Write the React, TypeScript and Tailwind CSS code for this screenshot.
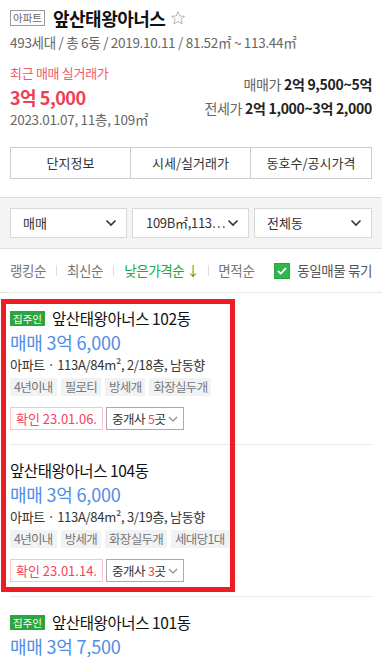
import React from "react";

const F = { fontFamily: '"Noto Sans CJK KR", "Noto Sans", sans-serif' };

function Chevron() {
  return (
    <svg width="12" height="8" viewBox="0 0 12 8">
      <path d="M1.5 1.5 L6 6 L10.5 1.5" fill="none" stroke="#333" strokeWidth="1.6" />
    </svg>
  );
}

function SmallChevron() {
  return (
    <svg width="10" height="6" viewBox="0 0 10 6" className="ml-[3px]">
      <path d="M1 1 L5 5 L9 1" fill="none" stroke="#888" strokeWidth="1.1" />
    </svg>
  );
}

type Item = {
  owner: boolean;
  title: string;
  price: string;
  detail: string;
  tags: string[];
  date: string;
  count: string;
};

const items: Item[] = [
  {
    owner: true,
    title: "앞산태왕아너스 102동",
    price: "매매 3억 6,000",
    detail: "113A/84m², 2/18층, 남동향",
    tags: ["4년이내", "필로티", "방세개", "화장실두개"],
    date: "23.01.06.",
    count: "5",
  },
  {
    owner: false,
    title: "앞산태왕아너스 104동",
    price: "매매 3억 6,000",
    detail: "113A/84m², 3/19층, 남동향",
    tags: ["4년이내", "방세개", "화장실두개", "세대당1대"],
    date: "23.01.14.",
    count: "3",
  },
  {
    owner: true,
    title: "앞산태왕아너스 101동",
    price: "매매 3억 7,500",
    detail: "113A/84m², 5/19층, 남동향",
    tags: ["4년이내", "방세개", "화장실두개"],
    date: "23.01.10.",
    count: "2",
  },
];

function ItemRow({ it }: { it: Item }) {
  return (
    <div className="mx-[10px] border-t border-[#ebebeb] pt-[15px] pb-[15px] h-[152px]">
      <div className="flex items-center h-[20px]">
        {it.owner && (
          <span className="bg-[#2aa63c] text-white text-[10.5px] leading-[15px] h-[15px] px-[3px] mr-[7px] flex items-center">
            집주인
          </span>
        )}
        <span className="text-[15.5px] text-[#111] leading-[20px] tracking-[-0.4px]">{it.title}</span>
      </div>
      <div className="mt-[2px] h-[24px] text-[18px] leading-[24px] text-[#4e8de6] tracking-[-0.2px]">{it.price}</div>
      <div className="mt-[2px] h-[18px] text-[13px] leading-[18px] text-[#333] tracking-[-0.3px]">
        아파트 · {it.detail}
      </div>
      <div className="mt-[4px] flex gap-[4px]">
        {it.tags.map((t) => (
          <span
            key={t}
            className="bg-[#f1f2f4] text-[#777] text-[12.5px] leading-[18px] h-[18px] px-[4px] tracking-[-0.7px]"
          >
            {t}
          </span>
        ))}
      </div>
      <div className="mt-[11px] flex gap-[3px]">
        <span className="h-[23px] border border-[#ffc2c8] text-[#f0455a] text-[13px] leading-[21px] px-[5px]">
          확인 23.01.{it.date.slice(6)}
        </span>
        <span className="h-[23px] border border-[#aaa] text-[#333] text-[12.5px] leading-[21px] px-[5px] flex items-center tracking-[-0.5px]">
          중개사 <span className="text-[#f0455a] ml-[3px]">{it.count}</span>곳
          <SmallChevron />
        </span>
      </div>
    </div>
  );
}

export default function App() {
  return (
    <div style={F} className="relative w-[382px] h-[657px] overflow-hidden bg-white">
      {/* Header */}
      <div className="px-[10px] pt-[9px]">
        <div className="flex items-center h-[18px]">
          <span className="border border-[#999] text-[#666] text-[10.5px] leading-[14px] h-[16px] px-[2px] mr-[8px] flex items-center">
            아파트
          </span>
          <span className="text-[18px] font-bold text-[#111] leading-[20px] tracking-[-0.5px]">앞산태왕아너스</span>
          <svg width="16" height="16" viewBox="0 0 24 24" className="ml-[5px]">
            <path
              d="M12 2.5 L14.8 9 L21.8 9.5 L16.4 14 L18.2 21 L12 17.2 L5.8 21 L7.6 14 L2.2 9.5 L9.2 9 Z"
              fill="none"
              stroke="#b5b5b5"
              strokeWidth="1.5"
              strokeLinejoin="round"
            />
          </svg>
        </div>
        <div className="mt-[6px] text-[13.5px] leading-[18px] text-[#666] tracking-[-0.3px]">
          493세대 / 총 6동 / 2019.10.11 / 81.52㎡ ~ 113.44㎡
        </div>
        <div className="mt-[13px] flex justify-between">
          <div>
            <div className="text-[13px] leading-[18px] text-[#f25a6a] tracking-[-0.3px]">최근 매매 실거래가</div>
            <div className="mt-[4px] text-[18px] leading-[22px] font-bold text-[#f03e50] tracking-[-0.5px]">3억 5,000</div>
            <div className="mt-[2px] text-[13.5px] leading-[18px] text-[#666] tracking-[-0.3px]">2023.01.07, 11층, 109㎡</div>
          </div>
          <div className="flex flex-col items-end pt-[11px]">
            <div className="text-[14px] leading-[18px] text-[#666] tracking-[-0.3px]">
              매매가 <span className="font-bold text-[#222]">2억 9,500~5억</span>
            </div>
            <div className="mt-[6px] text-[14px] leading-[18px] text-[#666] tracking-[-0.3px]">
              전세가 <span className="font-bold text-[#222]">2억 1,000~3억 2,000</span>
            </div>
          </div>
        </div>
        {/* Tabs */}
        <div className="mt-[19px] grid grid-cols-3 border border-[#ccc] h-[32px]">
          <div className="flex items-center justify-center text-[13px] text-[#333] border-r border-[#ccc]">단지정보</div>
          <div className="flex items-center justify-center text-[13px] text-[#333] border-r border-[#ccc]">시세/실거래가</div>
          <div className="flex items-center justify-center text-[13px] text-[#333]">동호수/공시가격</div>
        </div>
      </div>

      {/* Filter band */}
      <div className="mt-[18px] bg-[#f4f4f4] border-y border-[#dedede] h-[52px] px-[10px] flex items-center gap-[5px]">
        <div className="w-[118px] h-[30px] bg-white border border-[#d8d8d8] flex items-center justify-between pl-[12px] pr-[9px] text-[13px] text-[#333]">
          <span>매매</span>
          <Chevron />
        </div>
        <div className="w-[118px] h-[30px] bg-white border border-[#d8d8d8] flex items-center justify-between pl-[13px] pr-[9px] text-[13px] text-[#333]">
          <span className="tracking-[-0.3px]">109B㎡,113⋯</span>
          <Chevron />
        </div>
        <div className="w-[119px] h-[30px] bg-white border border-[#d8d8d8] flex items-center justify-between pl-[12px] pr-[9px] text-[13px] text-[#333]">
          <span>전체동</span>
          <Chevron />
        </div>
      </div>

      {/* Sort row */}
      <div className="h-[43px] px-[10px] flex items-center justify-between text-[13.5px] tracking-[-0.4px]">
        <div className="flex items-center">
          <span className="text-[#777]">랭킹순</span>
          <span className="mx-[10px] w-px h-[11px] bg-[#ddd]" />
          <span className="text-[#777]">최신순</span>
          <span className="mx-[10px] w-px h-[11px] bg-[#ddd]" />
          <span className="text-[#22a83a]">낮은가격순</span>
          <span className="text-[#22a83a] ml-[2px]">↓</span>
          <span className="mx-[9px] w-px h-[11px] bg-[#ddd]" />
          <span className="text-[#777]">면적순</span>
        </div>
        <div className="flex items-center">
          <span className="w-[16px] h-[16px] bg-[#2eb84b] border border-[#27a640] flex items-center justify-center mr-[7px]">
            <svg width="10" height="8" viewBox="0 0 10 8">
              <path d="M1 4 L3.8 6.6 L9 1.2" fill="none" stroke="white" strokeWidth="1.8" />
            </svg>
          </span>
          <span className="text-[#555]">동일매물 묶기</span>
        </div>
      </div>

      <div className="border-t border-[#e5e5e5]" />

      {/* List */}
      <div className="-mt-px">
        {items.map((it, i) => (
          <ItemRow key={i} it={it} />
        ))}
      </div>

      {/* Highlight overlay */}
      <div className="absolute left-[1px] top-[299px] w-[234px] h-[293px] border-[5px] border-[#ee1c25] pointer-events-none" />
    </div>
  );
}
